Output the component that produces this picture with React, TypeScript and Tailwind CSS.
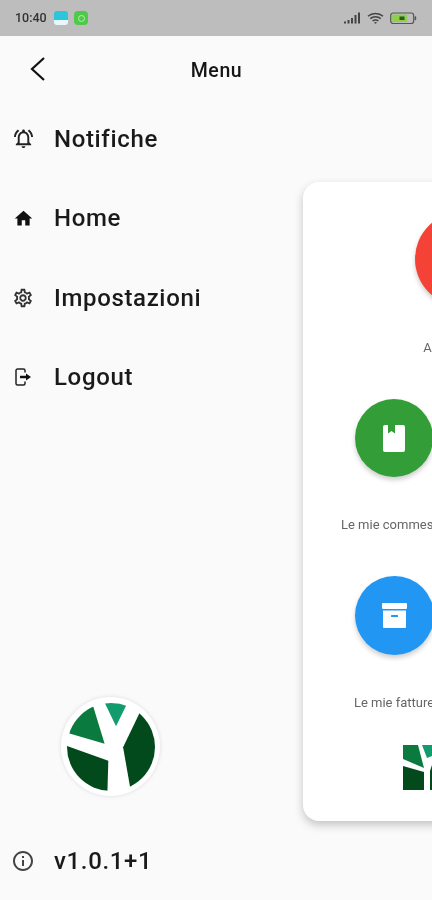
import { MdOutlineNotificationsActive, MdHome, MdOutlineSettings, MdOutlineInfo } from "react-icons/md";
import type { ReactNode } from "react";

function LogoutIcon() {
  return (
    <svg width="22" height="24" viewBox="0 0 22 24" fill="none">
      <path d="M13 7.5V5.5A1.5 1.5 0 0 0 11.5 4H5.5A1.5 1.5 0 0 0 4 5.5v13A1.5 1.5 0 0 0 5.5 20h6a1.5 1.5 0 0 0 1.5-1.5V16.5" stroke="#222" strokeWidth="1.5" />
      <path d="M8 10.8h6V8.5l5 3.5-5 3.5v-2.3H8z" fill="#111" />
    </svg>
  );
}

function BookIcon() {
  return (
    <svg width="22" height="27" viewBox="0 0 22 27">
      <path d="M2 0H5V8.5L8.5 6L12 8.5V0H20A2 2 0 0 1 22 2V25A2 2 0 0 1 20 27H2A2 2 0 0 1 0 25V2A2 2 0 0 1 2 0Z" fill="#fff" />
    </svg>
  );
}

function ArchiveIcon() {
  return (
    <svg width="25" height="25" viewBox="0 0 25 25">
      <rect x="0" y="0" width="25" height="6" rx="1" fill="#fff" />
      <path d="M1 7.5H24V24A1 1 0 0 1 23 25H2A1 1 0 0 1 1 24Z" fill="#fff" />
      <rect x="9" y="12" width="7" height="2" rx="0.5" fill="#2196f3" />
    </svg>
  );
}

function MenuRow({ icon, label }: { icon: ReactNode; label: string }) {
  return (
    <div className="flex h-[79.5px] items-center">
      <div className="flex w-[54px] items-center justify-center pr-[8px]">{icon}</div>
      <span className="text-[24px] font-medium tracking-[0.65px] text-[#1a1a1a]">{label}</span>
    </div>
  );
}

function Tile({ color, size, icon, label, gap }: { color: string; size: string; icon?: ReactNode; label: string; gap: string }) {
  return (
    <div className="flex flex-col items-center">
      <div className={`flex items-center justify-center rounded-full shadow-[0_3px_5px_rgba(0,0,0,0.2)] ${color} ${size}`}>{icon}</div>
      <span className={`whitespace-nowrap text-[13px] leading-[16px] text-[#666] ${gap}`}>{label}</span>
    </div>
  );
}

function StatusBar() {
  return (
    <div className="flex h-[36px] items-center justify-between bg-[#bdbdbd] pl-[15px] pr-[15px]">
      <div className="flex items-center">
        <span className="w-[39px] text-[12.5px] font-medium text-[#333]">10:40</span>
        <span className="h-[14px] w-[14px] rounded-[3px] bg-[linear-gradient(#2cc5dc_65%,#e8f8fa_65%)]" />
        <span className="ml-[6px] flex h-[14px] w-[14px] items-center justify-center rounded-[4px] bg-[#4ec94a]">
          <span className="h-[7px] w-[7px] rounded-full border border-[#b8efb0]" />
        </span>
      </div>
      <div className="flex items-center gap-[6px]">
        <svg width="17" height="12" viewBox="0 0 17 12" fill="#444">
          <rect x="0" y="9.5" width="2" height="2" />
          <rect x="3.5" y="8" width="2" height="3.5" />
          <rect x="7" y="6" width="2" height="5.5" />
          <rect x="10.5" y="3" width="2" height="8.5" />
          <rect x="14" y="0.5" width="2" height="11" />
        </svg>
        <svg width="17" height="13" viewBox="0 0 17 13" fill="none" stroke="#444" strokeWidth="1.5">
          <path d="M1 4.2C5 .6 12 .6 16 4.2" />
          <path d="M3.3 6.6C6 4.2 11 4.2 13.7 6.6" />
          <path d="M5.6 9C7 7.8 10 7.8 11.4 9" />
          <path d="M7.6 11.2C8.2 10.7 8.8 10.7 9.4 11.2" />
        </svg>
        <svg width="27" height="13" viewBox="0 0 27 13">
          <rect x="0.7" y="1" width="23" height="10.5" rx="2.5" fill="none" stroke="#555" strokeWidth="1.2" />
          <rect x="2.2" y="2.5" width="15" height="7.5" rx="1" fill="#8ed04a" />
          <rect x="24.6" y="4.2" width="1.6" height="4" rx="0.8" fill="#555" />
          <rect x="9.5" y="4.5" width="5" height="3.5" fill="#2c5a22" />
        </svg>
      </div>
    </div>
  );
}

function RoundLogo() {
  return (
    <div className="flex h-[99px] w-[99px] items-center justify-center rounded-full bg-white shadow-[0_0_4px_rgba(0,0,0,0.12)]">
      <svg width="88" height="88" viewBox="80 66 262 262">
        <defs>
          <clipPath id="logo-circle">
            <circle cx="211" cy="197" r="131" />
          </clipPath>
        </defs>
        <g clipPath="url(#logo-circle)">
          <path d="M150 50L192 187L50 146L50 50Z" fill="#0b7a3e" />
          <path d="M180 40L275 35L226 135Z" fill="#129b6c" />
          <path d="M342 0L400 0L400 340L272 340L247 198Z" fill="#024a1c" />
          <path d="M60 187L203 238L200 340L60 340Z" fill="#024a1c" />
        </g>
      </svg>
    </div>
  );
}

function SquareLogo() {
  return (
    <svg width="29" height="45" viewBox="0 0 29 45" className="block">
      <path d="M0 0H15L21 23L0 14Z" fill="#0b7a3e" />
      <path d="M19 0H29V11L24 13Z" fill="#129b6c" />
      <path d="M0 21L21 27V45H0Z" fill="#024a1c" />
      <path d="M29 20V45H27V26Z" fill="#024a1c" />
    </svg>
  );
}

export default function App() {
  return (
    <div className="flex h-[900px] w-[432px] flex-col overflow-hidden bg-[#fafafa] font-['Roboto',sans-serif] blur-[0.4px]">
      <StatusBar />
      <div className="flex min-h-0 flex-1">
        <div className="flex w-[303px] shrink-0 flex-col">
          <div className="relative flex h-[63px] items-start justify-center">
            <svg width="24" height="28" viewBox="0 0 24 28" fill="none" stroke="#111" strokeWidth="2.2" className="absolute left-[26px] top-[19px]">
              <path d="M18 3L6 14L18 25" />
            </svg>
            <span className="relative left-[65px] top-[22px] text-[19.5px] leading-[26px] font-medium tracking-[0.6px] text-[#151515]">Menu</span>
          </div>
          <div>
            <MenuRow icon={<MdOutlineNotificationsActive size={23} color="#222" />} label="Notifiche" />
            <MenuRow icon={<MdHome size={21} color="#111" />} label="Home" />
            <MenuRow icon={<MdOutlineSettings size={22} color="#333" />} label="Impostazioni" />
            <MenuRow icon={<LogoutIcon />} label="Logout" />
          </div>
          <div className="flex flex-1 flex-col items-start justify-end">
            <div className="ml-[61px]">
              <RoundLogo />
            </div>
            <div className="mt-[45px] mb-[19px] flex h-[40px] items-center">
              <div className="flex w-[54px] items-center justify-center pr-[8px]">
                <MdOutlineInfo size={24} color="#444" />
              </div>
              <span className="text-[24px] font-medium tracking-[0.65px] text-[#1a1a1a]">v1.0.1+1</span>
            </div>
          </div>
        </div>
        <div className="mt-[146px] h-[639px] w-[318px] shrink-0 rounded-[16px] bg-white px-[23px] pt-[30px] shadow-[0_4px_10px_rgba(0,0,0,0.22)]">
          <div className="flex justify-center">
            <Tile color="bg-[#f44336]" size="h-[94px] w-[94px]" label="Assegnazioni" gap="mt-[34px]" />
          </div>
          <div className="mt-[43px] grid grid-cols-2">
            <Tile color="bg-[#339e38]" size="h-[78px] w-[78px]" icon={<BookIcon />} label="Le mie commesse" gap="mt-[40px]" />
          </div>
          <div className="mt-[43px] grid grid-cols-2">
            <Tile color="bg-[#2196f3]" size="h-[79px] w-[79px]" icon={<ArchiveIcon />} label="Le mie fatture" gap="mt-[40px]" />
          </div>
          <div className="mt-[34px] pl-[77px]">
            <SquareLogo />
          </div>
        </div>
      </div>
    </div>
  );
}
